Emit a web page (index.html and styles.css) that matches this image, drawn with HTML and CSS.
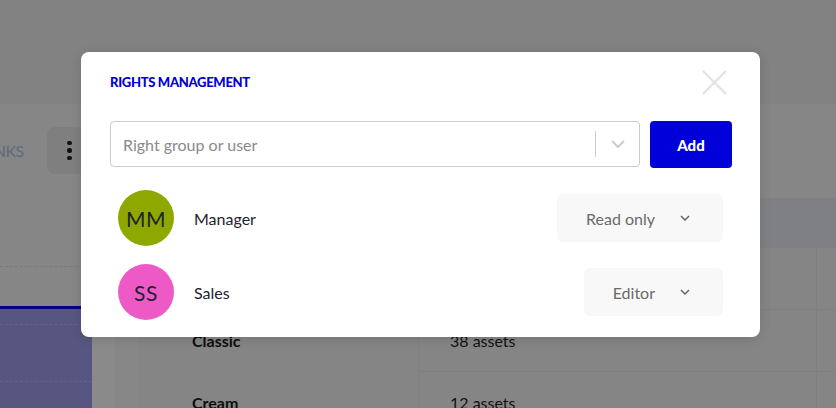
FILE: index.html
```html
<!DOCTYPE html>
<html lang="en">
<head>
<meta charset="utf-8">
<title>Rights management</title>
<link rel="stylesheet" href="styles.css">
</head>
<body>
<div class="page">
  <div class="topbar"></div>
  <div class="main">
    <aside class="side">
      <div class="side-tools">
        <span class="links">LINKS</span>
        <button class="kebab" type="button"><i></i><i></i><i></i></button>
      </div>
      <div class="side-dash"></div>
      <div class="side-active">
        <div class="dash"></div>
        <div class="dash"></div>
      </div>
    </aside>
    <div class="gutter"></div>
    <section class="content">
      <div class="content-top"></div>
      <div class="table">
        <div class="thead"><div class="c1"></div><div class="c2"></div><div class="c3"></div></div>
        <div class="trow"><div class="c1"></div><div class="c2"></div><div class="c3"></div></div>
        <div class="trow"><div class="c1 name">Classic</div><div class="c2">38 assets</div><div class="c3"></div></div>
        <div class="trow"><div class="c1 name">Cream</div><div class="c2">12 assets</div><div class="c3"></div></div>
      </div>
    </section>
  </div>
</div>

<div class="modal" role="dialog" aria-label="Rights management">
  <div class="modal-head">
    <h2 class="modal-title">RIGHTS MANAGEMENT</h2>
    <button class="close" type="button" aria-label="Close">
      <svg width="25" height="25" viewBox="0 0 25 25"><path d="M1 1 L24 24 M24 1 L1 24" stroke="#e2e2e2" stroke-width="2.2" fill="none"/></svg>
    </button>
  </div>
  <div class="search-row">
    <div class="select">
      <span class="placeholder">Right group or user</span>
      <span class="sep"></span>
      <svg class="select-chev" width="16" height="10" viewBox="0 0 16 10"><path d="M2 2 L8 8 L14 2" stroke="#cccccc" stroke-width="2" fill="none"/></svg>
    </div>
    <button class="add" type="button">Add</button>
  </div>
  <ul class="rights">
    <li class="right">
      <span class="avatar olive">MM</span>
      <span class="who">Manager</span>
      <button class="role" type="button">Read only
        <svg width="10" height="6" viewBox="0 0 10 6"><path d="M1 1 L5 5 L9 1" stroke="#666" stroke-width="1.5" fill="none"/></svg>
      </button>
    </li>
    <li class="right">
      <span class="avatar pink">SS</span>
      <span class="who">Sales</span>
      <button class="role" type="button">Editor
        <svg width="10" height="6" viewBox="0 0 10 6"><path d="M1 1 L5 5 L9 1" stroke="#666" stroke-width="1.5" fill="none"/></svg>
      </button>
    </li>
  </ul>
</div>
</body>
</html>
```
FILE: styles.css
```css
* { box-sizing: border-box; }
html, body { margin: 0; padding: 0; }
body {
  width: 836px;
  height: 408px;
  overflow: hidden;
  font-family: Lato, "Liberation Sans", sans-serif;
  background: #848484;
  position: relative;
}

/* dimmed page behind the dialog */
.page { width: 836px; height: 408px; overflow: hidden; display: flex; flex-direction: column; }
.topbar { height: 104px; background: #828282; flex: none; }
.main { flex: 1; display: flex; background: #868686; min-height: 0; }
.side { width: 92px; flex: none; display: flex; flex-direction: column; }
.side-tools { height: 162px; flex: none; display: flex; align-items: flex-start; padding-top: 23px; gap: 23px; }
.links { margin-left: -18px; margin-top: 14px; font-size: 16px; color: #5e6a80; letter-spacing: -0.5px; }
.kebab {
  width: 48px; height: 47px; border: 0; border-radius: 8px; background: #7f7f7f;
  display: flex; flex-direction: column; align-items: center; justify-content: center; gap: 3px; padding: 0;
}
.kebab i { width: 4.5px; height: 4.5px; border-radius: 50%; background: #111; display: block; }
.side-dash { height: 40px; flex: none; border-top: 1px dashed #7a7a7a; }
.side-active { flex: 1; background: #565680; border-top: 3px solid #00008a; padding-top: 15px; }
.side-active .dash { border-top: 1px dashed #626290; height: 57px; }
.gutter { width: 70px; flex: none; background: linear-gradient(90deg, #8a8a8a 0, #8a8a8a 23px, #878787 23px, #878787 46px, #858585 46px); }
.content { flex: 1; display: flex; flex-direction: column; }
.content-top { height: 94px; background: #868686; flex: none; }
.table { flex: 1; }
.thead, .trow { display: flex; }
.thead { height: 49px; background: #7e8084; }
.trow { height: 62px; background: #858585; }
.trow .c2, .trow .c3 { border-top: 1px solid #7f7f7f; }
.c1 { width: 256px; padding-left: 30px; display: flex; align-items: center; }
.c2 { width: 398px; padding-left: 31px; display: flex; align-items: center; border-left: 1px solid #808080; font-size: 16px; color: #121212; }
.c3 { flex: 1; border-left: 1px solid #7f7f7f; }
.name { font-weight: 700; font-size: 16px; color: #0d0d0d; }

/* dialog */
.modal {
  position: absolute;
  left: 81px; top: 52px;
  width: 679px; height: 285px;
  background: #fff;
  border-radius: 8px;
  box-shadow: 0 2px 12px rgba(0,0,0,0.12);
  padding: 18px 28px 17px 29px;
  display: flex; flex-direction: column;
}
.modal-head { height: 24px; display: flex; align-items: center; justify-content: space-between; }
.modal-title { margin: 0; font-size: 13px; font-weight: 900; color: #0000d6; letter-spacing: -0.3px; }
.close { border: 0; background: none; padding: 0; margin-right: 5px; width: 25px; height: 25px; display: flex; }

.search-row { margin-top: 27px; display: flex; gap: 10px; height: 47px; }
.select {
  flex: 1; height: 46px; border: 1px solid #cccccc; border-radius: 4px;
  display: flex; align-items: center; padding-left: 12px; padding-right: 13px;
}
.placeholder { flex: 1; font-size: 16px; color: #8a8a8a; }
.sep { width: 1px; height: 26px; background: #cccccc; margin-right: 14px; }
.select-chev { display: block; }
.add {
  width: 82px; height: 47px; border: 0; border-radius: 4px; background: #0000d8;
  color: #fff; font-family: Lato, sans-serif; font-weight: 900; font-size: 15px; padding: 0;
}

.rights { list-style: none; margin: 22px 0 0; padding: 0; display: flex; flex-direction: column; gap: 18px; }
.right { display: flex; align-items: center; height: 56px; padding-left: 8px; padding-right: 9px; }
.avatar {
  width: 56px; height: 56px; border-radius: 50%; flex: none;
  display: flex; align-items: center; justify-content: center;
  font-size: 21px; color: #1d2230; letter-spacing: 0.5px;
}
.olive { background: #8fa800; }
.pink { background: #ee5ac5; }
.who { flex: 1; margin-left: 20px; font-size: 16px; color: #1f2130; }
.role {
  height: 48px; border: 0; border-radius: 6px; background: #f8f8f8;
  font-family: Lato, sans-serif; font-size: 16px; color: #6a6a6a;
  display: flex; align-items: center; gap: 25px; padding: 0 33px 0 29px;
}
.role svg { display: block; }
```
